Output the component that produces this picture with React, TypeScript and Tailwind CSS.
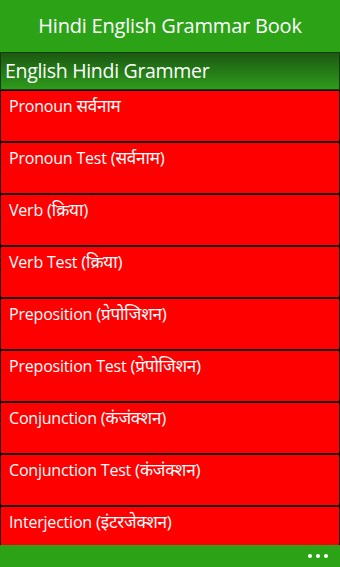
import React from "react";

const items: [string, string][] = [
  ["Pronoun ", "सर्वनाम"],
  ["Pronoun Test ", "(सर्वनाम)"],
  ["Verb ", "(क्रिया)"],
  ["Verb Test ", "(क्रिया)"],
  ["Preposition ", "(प्रेपोजिशन)"],
  ["Preposition Test ", "(प्रेपोजिशन)"],
  ["Conjunction ", "(कंजंक्शन)"],
  ["Conjunction Test ", "(कंजंक्शन)"],
  ["Interjection ", "(इंटरजेक्शन)"],
];

export default function App() {
  return (
    <div
      className="w-[340px] h-[567px] flex flex-col overflow-hidden bg-[#2a9f15]"
      style={{ fontFamily: '"Open Sans", "Noto Sans", "Noto Sans Devanagari", sans-serif' }}
    >
      <div className="h-[52px] shrink-0 flex items-center justify-center bg-[#2ca316] text-white text-[20px] tracking-[-0.2px] pb-[1px]">
        Hindi English Grammar Book
      </div>
      <div className="h-[38px] shrink-0 flex items-center px-[4px] border border-[#143d0c] bg-gradient-to-b from-[#1c5a11] to-[#2e9b1b] text-white text-[19.5px] tracking-[-0.3px]">
        English Hindi Grammer
      </div>
      <div className="flex-1 overflow-hidden flex flex-col bg-[#ff0000]">
        {items.map(([en, hi]) => (
          <div
            key={en + hi}
            className="h-[52px] shrink-0 border border-[#1a0000] bg-[#ff0000] text-white text-[16px] tracking-[-0.2px] px-[8px] pt-[2px]"
          >
            {en}
            <span className="text-[17px]">{hi}</span>
          </div>
        ))}
      </div>
      <div className="h-[22px] shrink-0 flex items-center justify-end pr-[12px] gap-[4px] bg-[#2ca316]">
        <span className="w-[4px] h-[4px] rounded-full bg-white" />
        <span className="w-[4px] h-[4px] rounded-full bg-white" />
        <span className="w-[4px] h-[4px] rounded-full bg-white" />
      </div>
    </div>
  );
}
